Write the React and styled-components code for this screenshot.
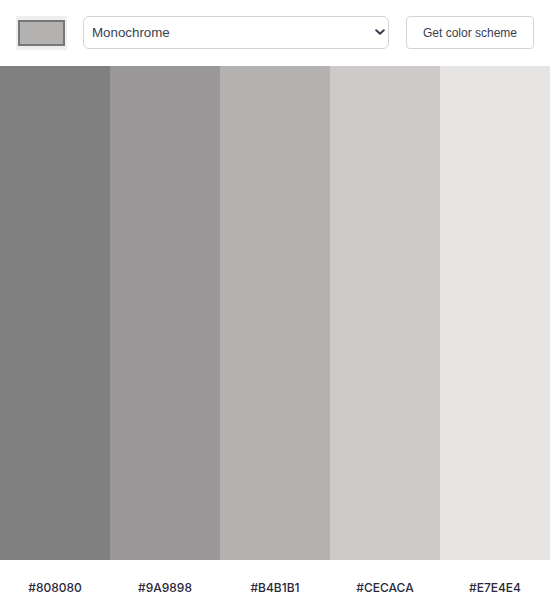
import React, { useState } from "react";
import styled, { createGlobalStyle } from "styled-components";

const GlobalStyle = createGlobalStyle`
  * { box-sizing: border-box; }
  body {
    margin: 0;
    font-family: Inter, "Liberation Sans", sans-serif;
    background: #ffffff;
  }
`;

const colors = ["#808080", "#9A9898", "#B4B1B1", "#CECACA", "#E7E4E4"];

export default function App() {
  const [seed, setSeed] = useState("#b4b1b1");
  const [mode, setMode] = useState("monochrome");

  return (
    <>
      <GlobalStyle />
      <Page>
        <Header>
          <ColorPicker
            type="color"
            value={seed}
            onChange={(e) => setSeed(e.target.value)}
          />
          <SelectWrap>
            <ModeSelect value={mode} onChange={(e) => setMode(e.target.value)}>
              <option value="monochrome">Monochrome</option>
              <option value="monochrome-dark">Monochrome-dark</option>
              <option value="monochrome-light">Monochrome-light</option>
              <option value="analogic">Analogic</option>
              <option value="complement">Complement</option>
            </ModeSelect>
            <Chevron viewBox="0 0 10 6" aria-hidden="true">
              <path d="M1.2 1.2 L5 4.8 L8.8 1.2" />
            </Chevron>
          </SelectWrap>
          <SchemeButton>Get color scheme</SchemeButton>
        </Header>
        <Bars>
          {colors.map((c) => (
            <Bar key={c} $color={c} />
          ))}
        </Bars>
        <Footer>
          {colors.map((c) => (
            <HexLabel key={c}>{c}</HexLabel>
          ))}
        </Footer>
      </Page>
    </>
  );
}

const Page = styled.div`
  display: flex;
  flex-direction: column;
  height: 615px;
`;

const Header = styled.header`
  display: flex;
  align-items: flex-start;
  gap: 16px;
  height: 66px;
  padding: 16px;
`;

const ColorPicker = styled.input`
  width: 51px;
  height: 34px;
  padding: 3px 2px;
  border: none;
  background: #efefef;
  cursor: pointer;
  &::-webkit-color-swatch-wrapper {
    padding: 1px 0;
  }
  &::-webkit-color-swatch {
    border: 2px solid #777777;
    border-radius: 0;
  }
`;

const SelectWrap = styled.div`
  position: relative;
  flex: 1;
  display: flex;
`;

const ModeSelect = styled.select`
  appearance: none;
  flex: 1;
  height: 33px;
  padding: 0 24px 0 8px;
  border: 1px solid #d1d5db;
  border-radius: 6px;
  background: #ffffff;
  color: #374151;
  font-family: "Liberation Sans", Arial, sans-serif;
  font-size: 13.333px;
`;

const Chevron = styled.svg`
  position: absolute;
  right: 4px;
  top: 13px;
  width: 10px;
  height: 6px;
  fill: none;
  stroke: #374151;
  stroke-width: 2;
  stroke-linecap: round;
  stroke-linejoin: round;
  pointer-events: none;
`;

const SchemeButton = styled.button`
  height: 33px;
  padding: 0 16px;
  margin-left: 1px;
  border: 1px solid #d1d5db;
  border-radius: 4px;
  background: #ffffff;
  color: #374151;
  font-family: "Liberation Sans", Arial, sans-serif;
  font-size: 12px;
  cursor: pointer;
`;

const Bars = styled.div`
  display: grid;
  grid-template-columns: repeat(5, 1fr);
  flex: 1;
`;

const Bar = styled.div`
  background: ${(p) => p.$color};
`;

const Footer = styled.footer`
  display: grid;
  grid-template-columns: repeat(5, 1fr);
  align-items: center;
  height: 55px;
`;

const HexLabel = styled.span`
  text-align: center;
  font-size: 12px;
  font-weight: 500;
  color: #2b283a;
`;
